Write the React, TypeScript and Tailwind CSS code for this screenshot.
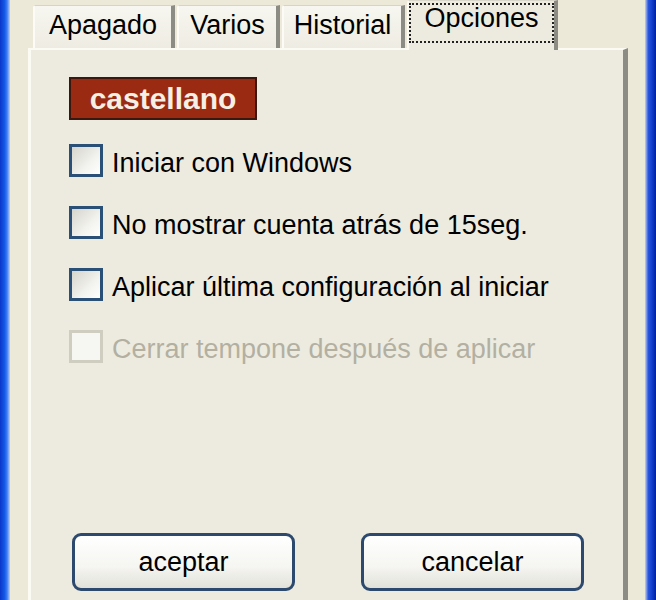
import React from "react";

function Tab({ label, width, selected }: { label: string; width: string; selected?: boolean }) {
  if (selected) {
    return (
      <div
        className={`${width} h-[50px] -mb-[2px] relative z-10 flex flex-col bg-[#EDEBE0] border-l-2 border-l-[#FBFAF3] border-r-[4px] border-r-[#8C8B84] border-t border-t-[#D9D7CC] rounded-tl-[3px] pt-[2px]`}
      >
        <div className="h-[40px] border-2 border-dotted border-[#222] flex justify-center items-start">
          <span className="text-[27px] leading-[27px] text-black">{label}</span>
        </div>
      </div>
    );
  }
  return (
    <div
      className={`${width} h-[43px] flex justify-center items-start pt-[6px] bg-[linear-gradient(to_bottom,#F7F6F0,#EEECE2)] border-l-2 border-l-[#FCFBF6] border-r-[4px] border-r-[#8C8B84] border-t border-t-[#D6D4C9] rounded-tl-[3px]`}
    >
      <span className="text-[27px] leading-[27px] text-black">{label}</span>
    </div>
  );
}

function Check({ label, disabled }: { label: string; disabled?: boolean }) {
  return (
    <div className="flex items-center h-[33px]">
      <div
        className={
          disabled
            ? "w-[34px] h-[33px] border-[3px] border-[#CFCDC0] bg-[#F6F6F3]"
            : "w-[34px] h-[33px] border-[3px] border-[#2A5078] bg-[linear-gradient(135deg,#D5D4CC,#F2F2EE_60%,#FFFFFF)]"
        }
      />
      <span
        className={`ml-[9px] pt-[5px] text-[27px] leading-[27px] ${disabled ? "text-[#B3B0A2]" : "text-black"}`}
      >
        {label}
      </span>
    </div>
  );
}

function Btn({ label }: { label: string }) {
  return (
    <div className="w-[223px] h-[58px] rounded-[9px] border-[3px] border-[#2D4A6E] bg-[linear-gradient(to_bottom,#FFFFFF,#F5F5F1_60%,#E2E1D9)] flex items-center justify-center">
      <span className="text-[27px] leading-[27px] text-black">{label}</span>
    </div>
  );
}

export default function App() {
  return (
    <div className="w-[656px] h-[600px] flex overflow-hidden bg-[#ECE9D8] font-['Liberation_Sans',Arial,sans-serif]">
      <div className="w-[10px] h-full bg-[linear-gradient(to_right,#0A36C8,#1458E6_45%,#3C7BF0_70%,#BCD0F6)]" />
      <div className="flex-1 flex flex-col pl-[18px] pr-[17px]">
        <div className="h-[48px] flex items-end gap-[2px] pl-[5px] relative z-10">
          <Tab label="Apagado" width="w-[142px]" />
          <Tab label="Varios" width="w-[103px]" />
          <Tab label="Historial" width="w-[123px]" />
          <Tab label="Opciones" width="w-[151px]" selected />
        </div>
        <div className="flex-1 flex flex-col bg-[#EDEBE0] border-l-[3px] border-l-[#FBFAF3] border-t-2 border-t-[#FBFAF3] border-r-[5px] border-r-[#8C8B84] pl-[38px] pt-[27px]">
          <div className="w-[188px] h-[43px] border-2 border-[#3A1810] bg-[#9A2A12] flex items-center justify-center">
            <span className="text-[30px] leading-[30px] font-bold text-[#F6EFE4]">castellano</span>
          </div>
          <div className="mt-[24px] flex flex-col gap-[29px]">
            <Check label="Iniciar con Windows" />
            <Check label="No mostrar cuenta atrás de 15seg." />
            <Check label="Aplicar última configuración al iniciar" />
            <Check label="Cerrar tempone después de aplicar" disabled />
          </div>
          <div className="mt-[170px] ml-[3px] flex gap-[66px]">
            <Btn label="aceptar" />
            <Btn label="cancelar" />
          </div>
        </div>
      </div>
      <div className="w-[11px] h-full bg-[linear-gradient(to_right,#C9CEF2,#2A55DC_30%,#1440D0_60%,#00209E)]" />
    </div>
  );
}
